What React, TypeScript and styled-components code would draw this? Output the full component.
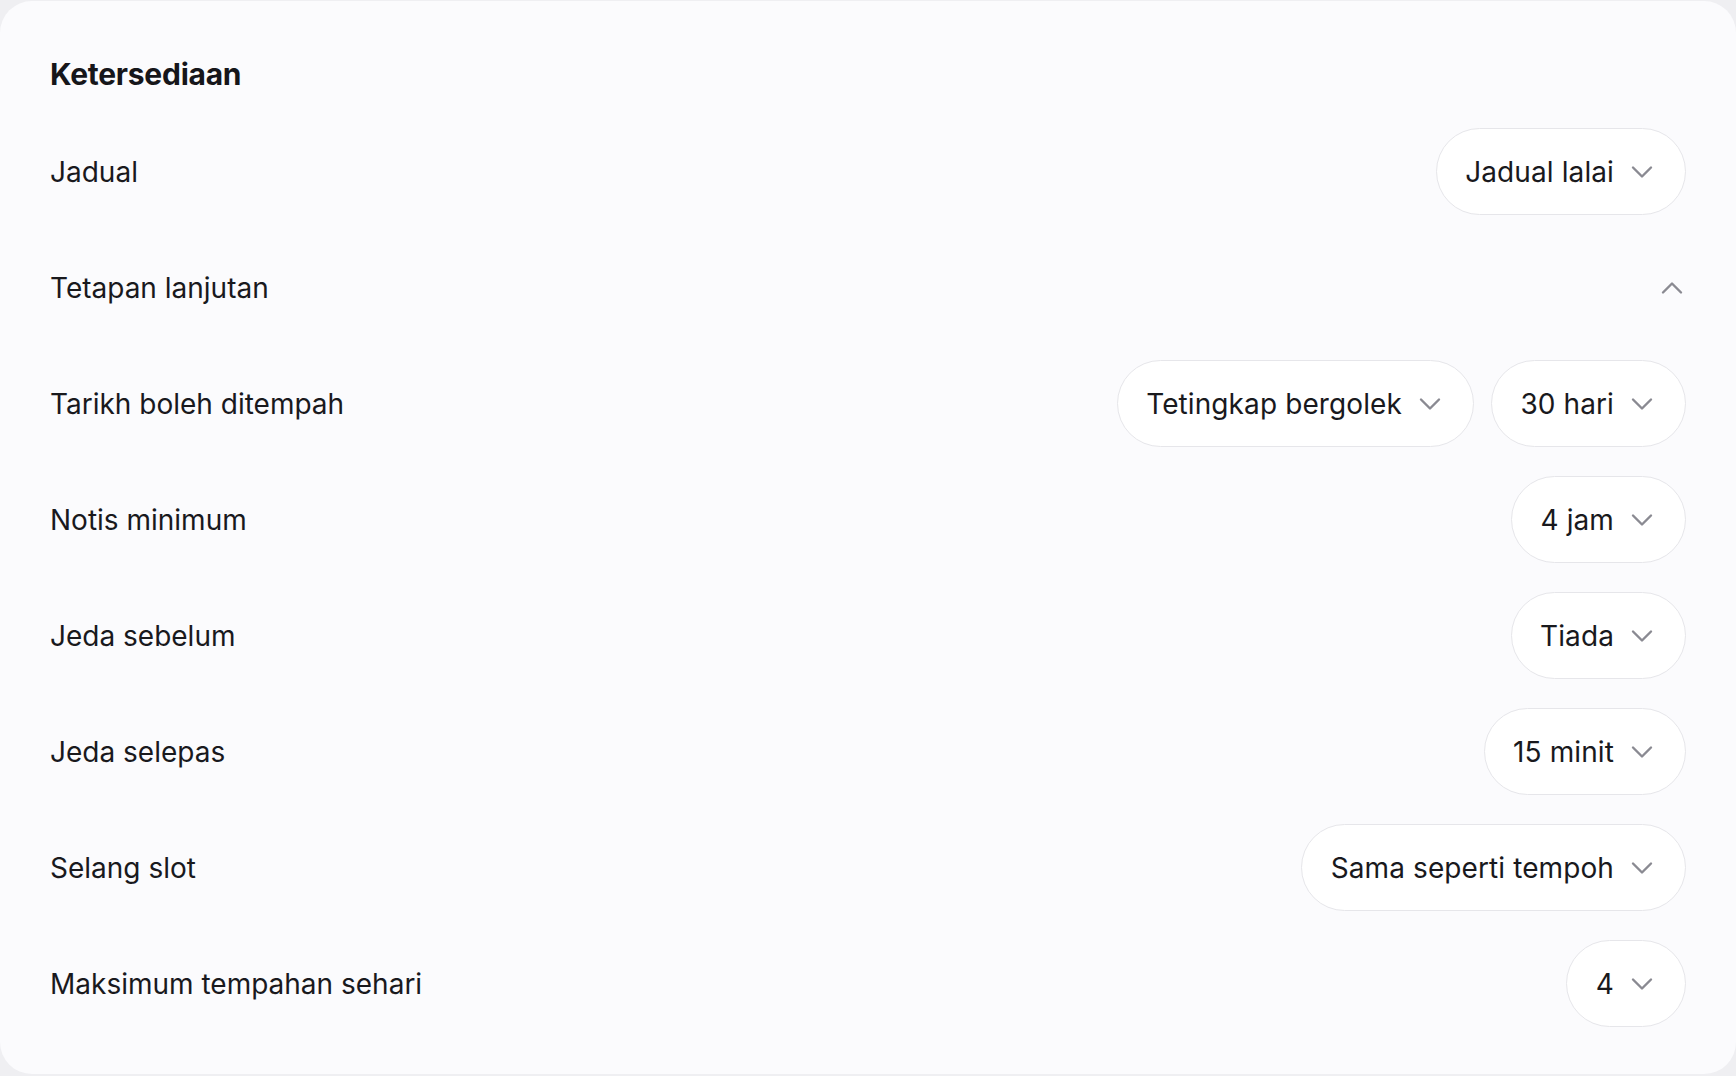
import React from "react";
import styled, { createGlobalStyle } from "styled-components";

const GlobalStyle = createGlobalStyle`
  html, body {
    margin: 0;
    padding: 0;
    background: #efeff2;
  }
  body {
    font-family: "Inter", "Noto Sans", sans-serif;
    color: #19191d;
    -webkit-font-smoothing: antialiased;
  }
  * { box-sizing: border-box; }
`;

const Page = styled.div`
  padding-top: 1px;
  height: 1076px;
`;

const Card = styled.section`
  height: 1073px;
  background: #fbfbfd;
  border-radius: 32px;
  padding: 50px 50px 0 50px;
  display: flex;
  flex-direction: column;
`;

const Heading = styled.h2`
  margin: 0;
  font-size: 30px;
  line-height: 46px;
  font-weight: 700;
  letter-spacing: -0.25px;
  color: #16161a;
`;

const Rows = styled.div`
  margin-top: 31px;
  display: flex;
  flex-direction: column;
  gap: 29px;
`;

const Row = styled.div`
  height: 87px;
  display: flex;
  align-items: center;
  justify-content: space-between;
`;

const Label = styled.span`
  font-size: 28px;
  font-weight: 400;
  letter-spacing: 0;
  color: #19191d;
`;

const Controls = styled.div`
  display: flex;
  align-items: center;
  gap: 17px;
`;

const Pill = styled.button`
  height: 87px;
  display: inline-flex;
  align-items: center;
  gap: 10px;
  padding: 0 25px 0 28.5px;
  background: #ffffff;
  border: 1.5px solid #e6e6ea;
  border-radius: 999px;
  font-family: "Inter", "Noto Sans", sans-serif;
  font-size: 28px;
  font-weight: 400;
  letter-spacing: 0.1px;
  color: #19191d;
  cursor: pointer;
`;

const ToggleButton = styled.button`
  display: inline-flex;
  align-items: center;
  justify-content: center;
  margin-right: -4px;
  padding: 0;
  background: transparent;
  border: none;
  cursor: pointer;
  color: #8a8a92;
`;

const Chevron = styled.svg<{ $up?: boolean }>`
  width: 36px;
  height: 36px;
  flex: none;
  color: #8a8a92;
  transform: ${(p) => (p.$up ? "rotate(180deg)" : "none")};
`;

const ChevronIcon = ({ up }: { up?: boolean }) => (
  <Chevron
    $up={up}
    viewBox="0 0 24 24"
    fill="none"
    stroke="currentColor"
    strokeWidth={1.6}
    strokeLinecap="round"
    strokeLinejoin="round"
  >
    <path d="m6 9 6 6 6-6" />
  </Chevron>
);

const Select = ({ value }: { value: string }) => (
  <Pill type="button">
    <span>{value}</span>
    <ChevronIcon />
  </Pill>
);

type RowData = { label: string; values?: string[]; toggle?: boolean };

const rows: RowData[] = [
  { label: "Jadual", values: ["Jadual lalai"] },
  { label: "Tetapan lanjutan", toggle: true },
  { label: "Tarikh boleh ditempah", values: ["Tetingkap bergolek", "30 hari"] },
  { label: "Notis minimum", values: ["4 jam"] },
  { label: "Jeda sebelum", values: ["Tiada"] },
  { label: "Jeda selepas", values: ["15 minit"] },
  { label: "Selang slot", values: ["Sama seperti tempoh"] },
  { label: "Maksimum tempahan sehari", values: ["4"] },
];

export default function App() {
  return (
    <Page>
      <GlobalStyle />
      <Card>
        <Heading>Ketersediaan</Heading>
        <Rows>
          {rows.map((r) => (
            <Row key={r.label}>
              <Label>{r.label}</Label>
              {r.toggle ? (
                <ToggleButton type="button" aria-label="Tutup tetapan lanjutan">
                  <ChevronIcon up />
                </ToggleButton>
              ) : (
                <Controls>
                  {r.values!.map((v) => (
                    <Select key={v} value={v} />
                  ))}
                </Controls>
              )}
            </Row>
          ))}
        </Rows>
      </Card>
    </Page>
  );
}
